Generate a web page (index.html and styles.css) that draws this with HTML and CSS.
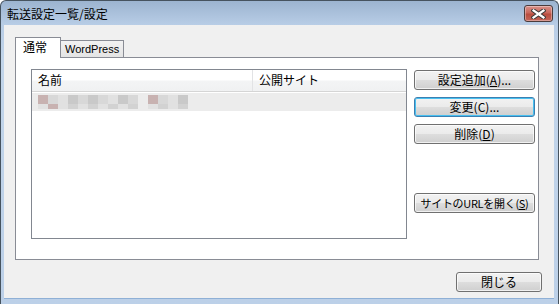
FILE: index.html
```html
<!DOCTYPE html>
<html lang="ja">
<head>
<meta charset="utf-8">
<link rel="stylesheet" href="styles.css">
</head>
<body>
<div class="window">
  <div class="titlebar">
    <span class="title">転送設定一覧/設定</span>
    <button class="close" aria-label="閉じる">
      <svg width="15" height="10" viewBox="0 0 15 10">
        <path d="M2.5 1.5 L12.5 8.5 M12.5 1.5 L2.5 8.5" stroke="#3a3a3a" stroke-width="4.2" stroke-linecap="square"/>
        <path d="M2.5 1.5 L12.5 8.5 M12.5 1.5 L2.5 8.5" stroke="#ffffff" stroke-width="2.2" stroke-linecap="square"/>
      </svg>
    </button>
  </div>
  <div class="client">
    <div class="tabs">
      <div class="tab active">通常</div>
      <div class="tab">WordPress</div>
    </div>
    <div class="panel">
      <div class="list">
        <div class="list-head">
          <div class="col col-name">名前</div>
          <div class="col col-site">公開サイト</div>
        </div>
        <div class="list-row">
          <div class="mosaic">
            <div class="mrow top">
              <i class="p"></i><i class="g1"></i><i class="g3"></i><i class="g2"></i><i class="g1"></i><i class="g2"></i><i class="g1"></i><i class="g3"></i><i class="g2"></i><i class="g1"></i><i class="gap"></i><i class="p"></i><i class="g1"></i><i class="g3"></i><i class="g2"></i>
            </div>
            <div class="mrow bot">
              <i class="g3"></i><i class="p"></i><i class="g3"></i><i class="g4"></i><i class="g3"></i><i class="g4"></i><i class="g3"></i><i class="g4"></i><i class="g3"></i><i class="g4"></i><i class="gap"></i><i class="g3"></i><i class="g4"></i><i class="g3"></i><i class="g4"></i>
            </div>
          </div>
        </div>
      </div>
      <div class="actions">
        <button class="btn">設定追加(<u>A</u>)...</button>
        <button class="btn focused">変更(C)...</button>
        <button class="btn">削除(<u>D</u>)</button>
        <button class="btn spaced">サイトのURLを開く(<u>S</u>)</button>
      </div>
    </div>
    <div class="footer">
      <button class="btn close-btn">閉じる</button>
    </div>
  </div>
</div>
</body>
</html>
```

FILE: styles.css
```css
* { box-sizing: border-box; }
html, body { margin: 0; padding: 0; background: #ffffff; }
body {
  font-family: "Noto Sans CJK JP", "Liberation Sans", sans-serif;
  font-size: 12px;
  color: #000;
}
.window {
  width: 559px;
  height: 304px;
  border: 1px solid #46535f;
  border-bottom: none;
  border-radius: 6px 6px 0 0;
  background: linear-gradient(to bottom, #9cb4d0 0px, #b8cde6 24px, #c2d5ea 60px, #bcd0e8 100%);
  padding: 0 4px 5px 3px;
  display: flex;
  flex-direction: column;
  overflow: hidden;
}
.titlebar {
  height: 24px;
  display: flex;
  align-items: center;
  justify-content: space-between;
  padding: 0 0 0 3px;
}
.title {
  font-size: 12px;
  line-height: 14px;
  margin-top: 2px;
  color: #000;
}
.close {
  width: 29px;
  height: 17px;
  margin-top: 1px;
  margin-right: 1px;
  padding: 0;
  border: 1px solid #4a3c3c;
  border-radius: 3px;
  background: linear-gradient(to bottom, #d9928a 0%, #c8675c 45%, #b84d3f 55%, #c4665a 100%);
  box-shadow: inset 0 0 0 1px rgba(255,255,255,0.35);
  display: flex;
  align-items: center;
  justify-content: center;
}
.client {
  flex: 1;
  background: #f0f0f0;
  padding: 12px 15px 0 11px;
  display: flex;
  flex-direction: column;
  border-bottom: 1px solid #8fb0d6;
}
.tabs {
  height: 20px;
  display: flex;
  align-items: flex-end;
  position: relative;
  z-index: 1;
}
.tab {
  height: 17px;
  width: 64px;
  border: 1px solid #898c95;
  border-bottom: none;
  padding: 0 0 0 4px;
  font-family: "Liberation Sans", "Noto Sans CJK JP", sans-serif;
  font-size: 11px;
  line-height: 17px;
  background: linear-gradient(to bottom, #f2f2f2, #e4e4e4);
  margin-left: -1px;
  white-space: nowrap;
}
.tab.active {
  height: 21px;
  margin-bottom: -1px;
  margin-left: 0;
  width: 46px;
  padding: 1px 0 0 7px;
  background: #ffffff;
  font-family: "Noto Sans CJK JP", sans-serif;
  font-size: 12px;
  line-height: 16px;
  position: relative;
  z-index: 2;
}
.panel {
  height: 203px;
  border: 1px solid #898c95;
  background: #ffffff;
  display: flex;
  gap: 7px;
  padding: 11px 3px 0 15px;
}
.list {
  width: 376px;
  height: 170px;
  border: 1px solid #828790;
  background: #fff;
}
.list-head {
  height: 22px;
  display: flex;
  background: linear-gradient(to bottom, #ffffff 0%, #ffffff 45%, #f3f4f5 55%, #f0f1f2 100%);
  border-bottom: 1px solid #d5d5d5;
}
.col {
  line-height: 20px;
  padding-left: 6px;
}
.col-name {
  width: 221px;
  border-right: 1px solid #e2e3e5;
}
.col-site {
  flex: 1;
}
.list-row {
  margin-top: 1px;
  height: 18px;
  background: #ececec;
  padding: 2px 0 0 6px;
}
.mosaic {
  width: 150px;
}
.mrow {
  display: flex;
}
.mrow i {
  display: block;
  width: 10px;
}
.mrow.top i { height: 9px; }
.mrow.bot i { height: 5px; }
.mrow i.gap { background: transparent; }
.p { background: #c8b2b1; }
.g1 { background: #d8d8d8; }
.g2 { background: #c9c9c9; }
.g3 { background: #e1e1e1; }
.g4 { background: #d2d2d2; }
.actions {
  width: 121px;
  padding-top: 1px;
  display: flex;
  flex-direction: column;
  gap: 7px;
}
.btn {
  height: 20px;
  padding: 0;
  border: 1px solid #707070;
  border-radius: 3px;
  background: linear-gradient(to bottom, #f2f2f2 0%, #ebebeb 48%, #dddddd 52%, #cfcfcf 100%);
  box-shadow: inset 0 0 0 1px rgba(255,255,255,0.7);
  font-family: "Noto Sans CJK JP", "Liberation Sans", sans-serif;
  font-size: 12px;
  line-height: 16px;
  color: #000;
  text-align: center;
  white-space: nowrap;
}
.btn u { text-decoration: underline; text-underline-offset: 1px; }
.btn.focused {
  border-color: #3c7fb1;
  box-shadow: inset 0 0 0 1px #48c0f0;
}
.btn.spaced {
  margin-top: 42px;
  font-size: 11px;
  letter-spacing: -0.3px;
}
.footer {
  display: flex;
  justify-content: flex-end;
  padding: 12px 0 0 0;
  margin-right: -3px;
}
.close-btn { width: 86px; }
```
